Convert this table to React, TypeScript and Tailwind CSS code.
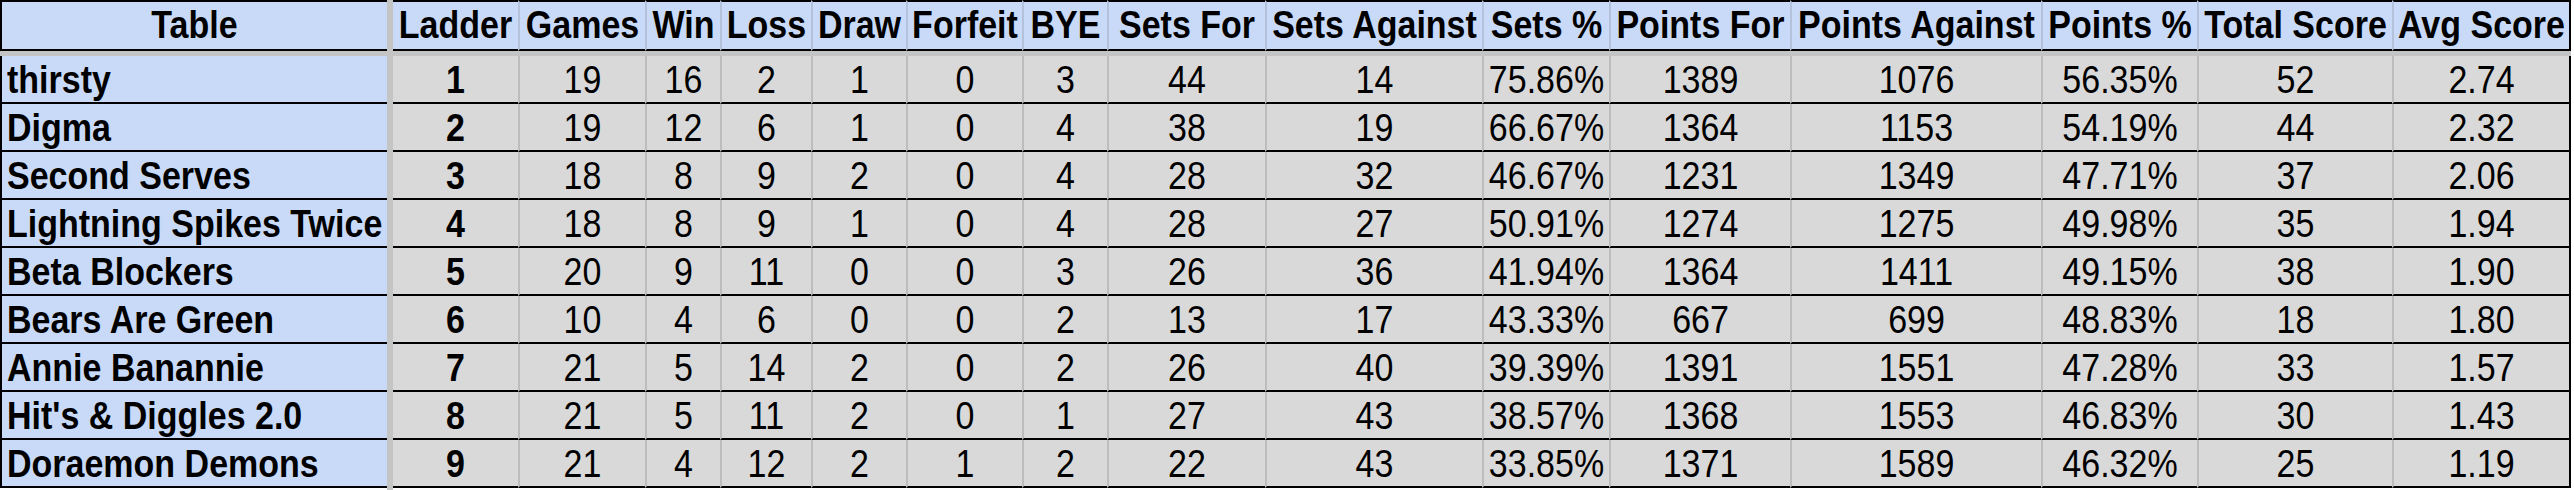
const columns = [
  "Ladder",
  "Games",
  "Win",
  "Loss",
  "Draw",
  "Forfeit",
  "BYE",
  "Sets For",
  "Sets Against",
  "Sets %",
  "Points For",
  "Points Against",
  "Points %",
  "Total Score",
  "Avg Score",
];

type Row = [string, ...(string | number)[]];

const rows: Row[] = [
  ["thirsty", 1, 19, 16, 2, 1, 0, 3, 44, 14, "75.86%", 1389, 1076, "56.35%", 52, "2.74"],
  ["Digma", 2, 19, 12, 6, 1, 0, 4, 38, 19, "66.67%", 1364, 1153, "54.19%", 44, "2.32"],
  ["Second Serves", 3, 18, 8, 9, 2, 0, 4, 28, 32, "46.67%", 1231, 1349, "47.71%", 37, "2.06"],
  ["Lightning Spikes Twice", 4, 18, 8, 9, 1, 0, 4, 28, 27, "50.91%", 1274, 1275, "49.98%", 35, "1.94"],
  ["Beta Blockers", 5, 20, 9, 11, 0, 0, 3, 26, 36, "41.94%", 1364, 1411, "49.15%", 38, "1.90"],
  ["Bears Are Green", 6, 10, 4, 6, 0, 0, 2, 13, 17, "43.33%", 667, 699, "48.83%", 18, "1.80"],
  ["Annie Banannie", 7, 21, 5, 14, 2, 0, 2, 26, 40, "39.39%", 1391, 1551, "47.28%", 33, "1.57"],
  ["Hit's & Diggles 2.0", 8, 21, 5, 11, 2, 0, 1, 27, 43, "38.57%", 1368, 1553, "46.83%", 30, "1.43"],
  ["Doraemon Demons", 9, 21, 4, 12, 2, 1, 2, 22, 43, "33.85%", 1371, 1589, "46.32%", 25, "1.19"],
];

// the sheet text renders a little taller than Arial's natural proportions
function Text({ children }: { children: React.ReactNode }) {
  return <span className="inline-block scale-y-[1.13]">{children}</span>;
}

export default function App() {
  return (
    <div className="flex w-[2574px] h-[490px] bg-white text-black font-['Liberation_Sans',Arial,sans-serif] text-[34px]">
      {/* frozen first column */}
      <div className="flex flex-col w-[387px]">
        <div className="h-[51px] border-2 border-r-0 border-black bg-[#c9daf8] font-bold text-center leading-[47px]">
          <Text>Table</Text>
        </div>
        <div className="h-[5px] bg-[#c4c4c4]" />
        {rows.map((row) => (
          <div
            key={row[0]}
            className="h-[48px] border-l-2 border-b-2 border-black bg-[#c9daf8] font-bold pl-[5px] pt-[3px] leading-[43px] whitespace-nowrap"
          >
            <Text>{row[0]}</Text>
          </div>
        ))}
      </div>

      <div className="w-[6px] bg-[#c4c4c4]" />

      <div className="grid grid-cols-[125px_127px_75px_91px_95px_116px_85px_158px_217px_127px_181px_251px_156px_195px_179px] auto-rows-min content-start">
        {columns.map((col, i) => (
          <div
            key={col}
            className={`h-[51px] border-y-2 border-black bg-[#c9daf8] font-bold text-center leading-[47px] whitespace-nowrap ${
              i > 0 ? "border-l-2 border-l-[#b3c1da]" : ""
            } ${i === columns.length - 1 ? "border-r-2 border-r-black" : ""}`}
          >
            <Text>{col}</Text>
          </div>
        ))}
        <div className="col-span-15 h-[5px] bg-[#c4c4c4]" />
        {rows.map((row) =>
          row.slice(1).map((value, i) => (
            <div
              key={`${row[0]}-${i}`}
              className={`h-[48px] border-b-2 border-black bg-[#d9d9d9] text-center pt-[3px] leading-[43px] ${
                i === 0 ? "font-bold" : ""
              } ${i > 0 ? "border-l-2 border-l-[#bdbdbd]" : ""} ${
                i === columns.length - 1 ? "border-r-2 border-r-black" : ""
              }`}
            >
              <Text>{value}</Text>
            </div>
          ))
        )}
      </div>
    </div>
  );
}
